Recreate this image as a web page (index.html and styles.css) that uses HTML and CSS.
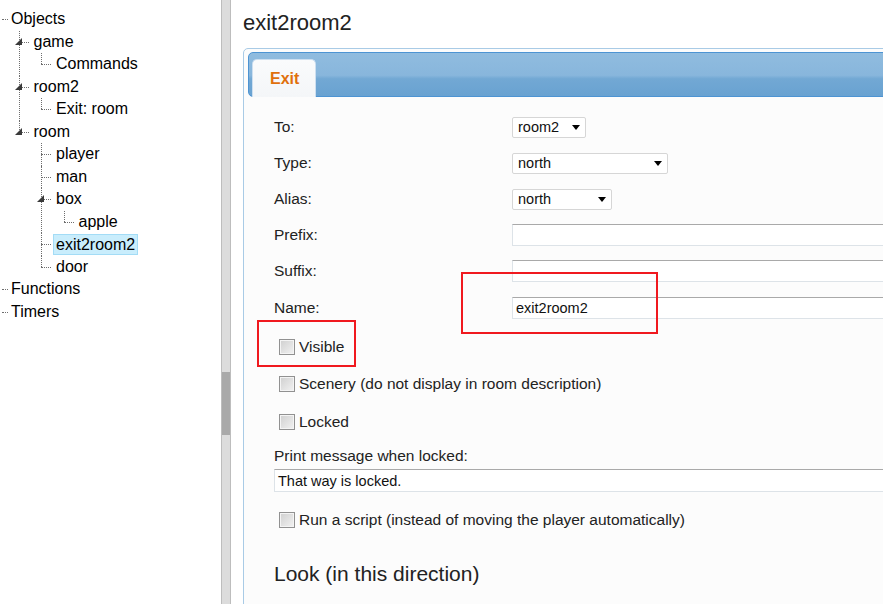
FILE: index.html
```html
<!DOCTYPE html>
<html>
<head>
<meta charset="utf-8">
<link rel="stylesheet" href="styles.css">
</head>
<body>
<div class="app">
  <div class="tree-pane">
    <ul class="tree">
      <li><div class="node"><span class="label">Objects</span></div>
        <ul>
          <li class="open"><div class="node"><span class="exp"></span><span class="label">game</span></div>
            <ul>
              <li><div class="node"><span class="label">Commands</span></div></li>
            </ul>
          </li>
          <li class="open"><div class="node"><span class="exp"></span><span class="label">room2</span></div>
            <ul>
              <li><div class="node"><span class="label">Exit: room</span></div></li>
            </ul>
          </li>
          <li class="open"><div class="node"><span class="exp"></span><span class="label">room</span></div>
            <ul>
              <li><div class="node"><span class="label">player</span></div></li>
              <li><div class="node"><span class="label">man</span></div></li>
              <li class="open"><div class="node"><span class="exp"></span><span class="label">box</span></div>
                <ul>
                  <li><div class="node"><span class="label">apple</span></div></li>
                </ul>
              </li>
              <li><div class="node"><span class="label selected">exit2room2</span></div></li>
              <li><div class="node"><span class="label">door</span></div></li>
            </ul>
          </li>
        </ul>
      </li>
      <li><div class="node"><span class="label">Functions</span></div></li>
      <li><div class="node"><span class="label">Timers</span></div></li>
    </ul>
  </div>
  <div class="splitter"><div class="thumb"></div></div>
  <div class="main">
    <h1 class="title">exit2room2</h1>
    <div class="panel">
      <div class="tabbar">
        <div class="tab">Exit</div>
      </div>
      <div class="content">
        <div class="row"><span class="flabel">To:</span><span class="select w-to"><span class="val">room2</span><span class="arrow"></span></span></div>
        <div class="row"><span class="flabel">Type:</span><span class="select w-type"><span class="val">north</span><span class="arrow"></span></span></div>
        <div class="row"><span class="flabel">Alias:</span><span class="select w-alias"><span class="val">north</span><span class="arrow"></span></span></div>
        <div class="row"><span class="flabel">Prefix:</span><span class="textbox wide"></span></div>
        <div class="row before-name"><span class="flabel">Suffix:</span><span class="textbox wide"></span></div>
        <div class="row"><span class="flabel">Name:</span><span class="textbox wide">exit2room2</span></div>
        <div class="check first"><span class="cb"></span><span>Visible</span></div>
        <div class="check"><span class="cb"></span><span>Scenery (do not display in room description)</span></div>
        <div class="check locked"><span class="cb"></span><span>Locked</span></div>
        <div class="plabel">Print message when locked:</div>
        <div class="textbox full">That way is locked.</div>
        <div class="check run"><span class="cb"></span><span>Run a script (instead of moving the player automatically)</span></div>
        <h2 class="look">Look (in this direction)</h2>
      </div>
    </div>
  </div>
</div>
<div class="annot annot-name"></div>
<div class="annot annot-visible"></div>
</body>
</html>
```

FILE: styles.css
```css
html, body {
  margin: 0;
  padding: 0;
  width: 883px;
  height: 604px;
  overflow: hidden;
  background: #ffffff;
  font-family: "Liberation Sans", Arial, sans-serif;
}

.app {
  display: flex;
  height: 604px;
}

/* ---------- tree ---------- */
.tree-pane {
  width: 221px;
  flex: none;
  background: #fff;
}

.tree, .tree ul {
  list-style: none;
  margin: 0;
  padding: 0;
}

.tree {
  padding-top: 8px;
  font-size: 16px;
  color: #000;
}

.tree ul {
  padding-left: 22.5px;
}

.tree li {
  position: relative;
}

.node {
  height: 22.5px;
  line-height: 22.5px;
  padding-left: 11px;
  white-space: nowrap;
}

.tree li::before {
  content: "";
  position: absolute;
  top: 11px;
  left: -4px;
  width: 10px;
  border-top: 1px dotted #6e6e6e;
}

.tree > li::before {
  left: 2px;
  width: 6px;
}

.tree ul > li::after {
  content: "";
  position: absolute;
  left: -4px;
  top: 0;
  bottom: 0;
  border-left: 1px dotted #6e6e6e;
}

.tree ul > li:last-child::after {
  bottom: auto;
  height: 11px;
}

.exp {
  position: absolute;
  z-index: 1;
  left: -8px;
  top: 7px;
  width: 0;
  height: 0;
  border-left: 7px solid transparent;
  border-bottom: 7px solid #3a3a3a;
}

.label {
  display: inline-block;
  vertical-align: top;
}

.label.selected {
  height: 19px;
  line-height: 19px;
  margin-top: 1px;
  margin-left: -3px;
  padding: 0 2px;
  background: #c9edfc;
  border: 1px solid #a3dcf6;
}

/* ---------- splitter ---------- */
.splitter {
  width: 8px;
  flex: none;
  background: #dcdcdc;
  border-left: 1px solid #bdbdbd;
  border-right: 1px solid #bdbdbd;
}

.thumb {
  margin-top: 372px;
  height: 63px;
  background: #a9a9a9;
}

/* ---------- main ---------- */
.main {
  flex: 1;
  min-width: 0;
  padding-left: 12px;
  overflow: hidden;
}

.title {
  margin: 0 0 12px 0;
  padding-top: 10px;
  font-size: 22px;
  line-height: 26px;
  font-weight: normal;
  color: #222;
  white-space: nowrap;
}

.panel {
  width: 700px;
  height: 600px;
  border: 1px solid #a9cbe6;
  border-radius: 5px;
  padding: 3px 0 0 4px;
  background: #fcfcfc;
  box-sizing: border-box;
}

.tabbar {
  height: 43px;
  border: 1px solid #4d94d3;
  border-radius: 5px;
  background: linear-gradient(to bottom, #90bcdf 0%, #88b6dc 52%, #72a8d4 60%, #69a2d1 100%);
  display: flex;
  align-items: flex-end;
  padding-left: 3px;
}

.tab {
  height: 37px;
  margin-bottom: -1px;
  padding: 0 16px 0 17px;
  border: 1px solid #cddff0;
  border-bottom: none;
  border-radius: 5px 5px 0 0;
  background: linear-gradient(to bottom, #fafbfc, #f4f6f8);
  color: #e0700c;
  font-weight: bold;
  font-size: 16px;
  line-height: 38px;
}

.content {
  padding: 19px 0 0 26px;
  font-size: 15.5px;
  color: #222;
}

.row {
  display: flex;
  align-items: center;
  height: 22px;
  margin-bottom: 14px;
}

.row.before-name {
  margin-bottom: 15px;
}

.flabel {
  width: 238px;
  flex: none;
}

.select {
  display: inline-flex;
  align-items: center;
  justify-content: space-between;
  height: 19px;
  box-sizing: content-box;
  border: 1px solid #d6d6d6;
  border-radius: 2px;
  background: #fff;
  padding: 0 5px 0 5px;
  font-size: 14.5px;
  color: #111;
}

.w-to { width: 62px; }
.w-type { width: 144px; }
.w-alias { width: 88px; }

.arrow {
  width: 0;
  height: 0;
  border-left: 4.5px solid transparent;
  border-right: 4.5px solid transparent;
  border-top: 5px solid #000;
}

.textbox {
  display: flex;
  align-items: center;
  height: 20px;
  border: 1px solid #dde3e8;
  border-top-color: #a9a9a9;
  background: #fff;
  padding-left: 3px;
  font-size: 14.5px;
  color: #111;
}

.textbox.wide {
  width: 500px;
  flex: none;
}

.textbox.full {
  width: 700px;
  height: 21px;
}

.check {
  display: flex;
  align-items: center;
  gap: 4px;
  height: 22px;
  padding-left: 5px;
  margin-top: 15px;
}

.check.first {
  margin-top: 17px;
}

.check.locked {
  margin-top: 16px;
}

.cb {
  width: 14px;
  height: 14px;
  flex: none;
  border: 1px solid #919191;
  background: linear-gradient(135deg, #cfcfcf, #f2f2f2);
  box-shadow: inset 0 0 0 1px #f4f4f4;
}

.plabel {
  margin-top: 14px;
  height: 18px;
  line-height: 18px;
  margin-bottom: 4px;
}

.check.run {
  margin-top: 17px;
}

.look {
  margin: 30px 0 0 0;
  font-size: 21px;
  line-height: 26px;
  font-weight: normal;
  color: #222;
}

/* ---------- annotations ---------- */
.annot {
  position: absolute;
  border: 2px solid #f0191f;
  box-sizing: border-box;
}

.annot-name {
  left: 461px;
  top: 272px;
  width: 197px;
  height: 62px;
}

.annot-visible {
  left: 257px;
  top: 320px;
  width: 99px;
  height: 47px;
}
```
